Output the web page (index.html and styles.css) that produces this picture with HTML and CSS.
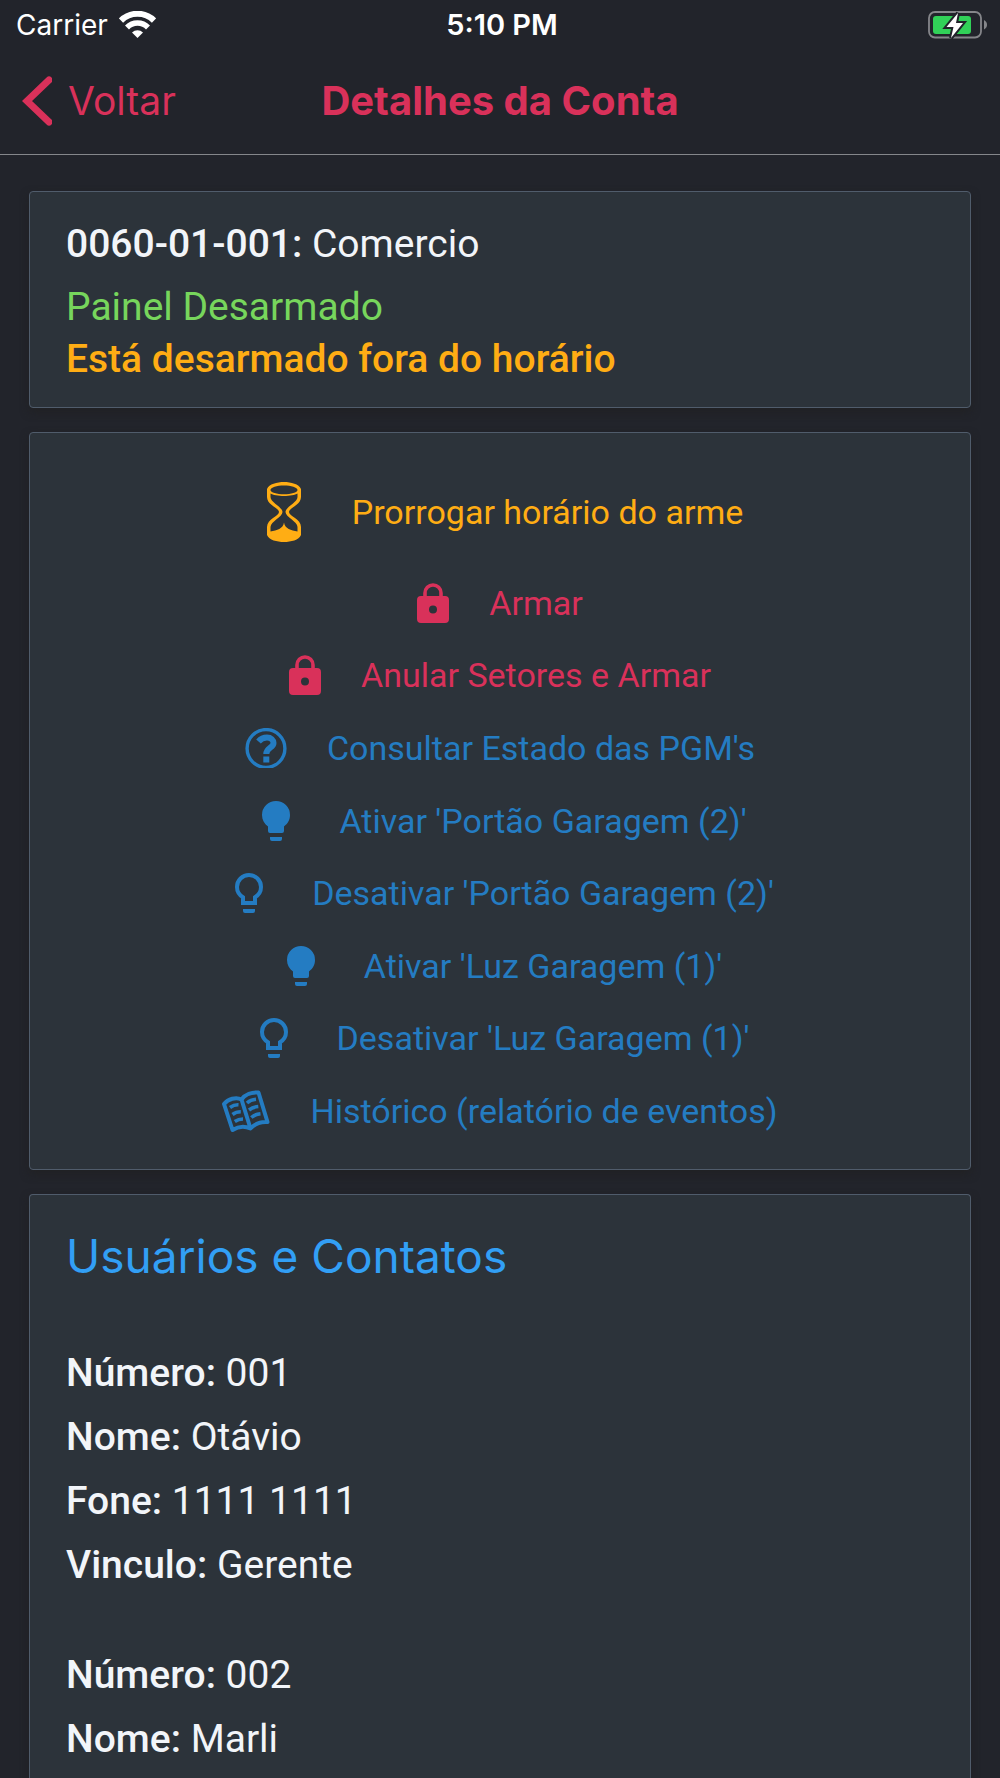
FILE: index.html
```
<!DOCTYPE html>
<html lang="pt-BR">
<head>
<meta charset="UTF-8">
<meta name="viewport" content="width=device-width, initial-scale=1">
<title>Detalhes da Conta</title>
<link rel="stylesheet" href="styles.css">
</head>
<body>
	<!-- icons used more than once -->
	<svg class="sprite" width="0" height="0" aria-hidden="true">
		<symbol id="lock" viewBox="0 0 32 40">
			<path d="M8 15V10a8 8 0 0 1 16 0v5" fill="none" stroke="currentColor" stroke-width="3.6"/>
			<path fill-rule="evenodd" fill="currentColor" d="M4 13H28a4 4 0 0 1 4 4V36a4 4 0 0 1-4 4H4a4 4 0 0 1-4-4V17a4 4 0 0 1 4-4zM16 22.500a4 4 0 1 0 0 8a4 4 0 1 0 0-8z"/>
		</symbol>
		<symbol id="bulb-on" viewBox="0 0 46 40">
			<path fill="currentColor" d="M23 0a14 14 0 0 1 14 14c0 5-2.300 8.800-6 11.400V30a2 2 0 0 1-2 2H17a2 2 0 0 1-2-2V25.400C11.300 22.800 9 19 9 14A14 14 0 0 1 23 0zM17 36H29V38a2 2 0 0 1-2 2H19a2 2 0 0 1-2-2z"/>
		</symbol>
		<symbol id="bulb-off" viewBox="0 0 46 40">
			<path fill="none" stroke="currentColor" stroke-width="4" d="M23 2a12 12 0 0 1 12 12c0 4.600-2.300 8-6 10.300V30H17V24.300C13.300 22 11 18.600 11 14A12 12 0 0 1 23 2z"/>
			<path fill="currentColor" d="M17 36H29V38a2 2 0 0 1-2 2H19a2 2 0 0 1-2-2z"/>
		</symbol>
	</svg>

	<div class="status-bar">
		<div class="carrier">
			<span>Carrier</span>
			<svg width="37" height="28" viewBox="0 0 37 28" aria-hidden="true">
				<path d="M2 9.500a23.500 23.500 0 0 1 33 0" fill="none" stroke="#fff" stroke-width="6"/>
				<path d="M8 16.500a14.500 14.500 0 0 1 21 0" fill="none" stroke="#fff" stroke-width="5.500"/>
				<path d="M18.500 27L13 21.500a8 8 0 0 1 11 0z" fill="#fff"/>
			</svg>
		</div>
		<div class="time">5:10 PM</div>
		<div class="battery">
			<svg width="60" height="30" viewBox="0 0 60 30" aria-hidden="true">
				<rect x="1" y="2" width="52" height="25.500" rx="6" fill="none" stroke="#85868a" stroke-width="1.800"/>
				<path d="M56 10c4 2 4 7.500 0 9.500z" fill="#85868a"/>
				<rect x="5" y="6" width="38" height="18" rx="3" fill="#31d158"/>
				<path d="M30 3L18.500 17h7L23 28 35 13h-7z" fill="#fff" stroke="#22242b" stroke-width="4" paint-order="stroke"/>
			</svg>
		</div>
	</div>

	<header class="nav">
		<a class="back" href="#">
			<svg width="30" height="50" viewBox="0 0 30 50" aria-hidden="true">
				<path d="M27 4L5 25L27 46" fill="none" stroke="currentColor" stroke-width="7" stroke-linecap="round"/>
			</svg>
			<span>Voltar</span>
		</a>
		<h1>Detalhes da Conta</h1>
	</header>

	<main>
		<section class="card account">
			<p><strong>0060-01-001:</strong> Comercio</p>
			<p class="state">Painel Desarmado</p>
			<p class="warning">Está desarmado fora do horário</p>
		</section>

		<section class="card actions">
			<div class="group extend">
				<button class="action" type="button">
					<svg width="55" height="60" viewBox="0 0 55 60" aria-hidden="true">
						<path fill="currentColor" fill-rule="evenodd" d="M10 7C12 2 20 0 27 0S42 2 44 7V15C44 23 32 26 32 30S44 37 44 45V53C42 58 34 60 27 60S12 58 10 53V45C10 37 22 34 22 30S10 23 10 15zM27 3.500C20 3.500 13.500 5.500 13.500 8S20 12.300 27 12.300 40.500 10.500 40.500 8 34 3.500 27 3.500zM13.500 11.500V15C13.500 20.500 25.500 25 25.500 30S13.500 39.500 13.500 45V49.500C20 48 26 47 27 40.500 28 47 34 48 40.500 49.500V45C40.500 39.500 28.500 35 28.500 30S40.500 20.500 40.500 15V11.500C36 14.800 18 14.800 13.500 11.500z"/>
					</svg>
					<span>Prorrogar horário do arme</span>
				</button>
			</div>
			<div class="group arm">
				<button class="action" type="button">
					<svg width="32" height="40" aria-hidden="true"><use href="#lock"/></svg>
					<span>Armar</span>
				</button>
				<button class="action" type="button">
					<svg width="32" height="40" aria-hidden="true"><use href="#lock"/></svg>
					<span>Anular Setores e Armar</span>
				</button>
			</div>
			<div class="group">
				<button class="action" type="button">
					<svg width="42" height="40" viewBox="0 0 42 40" aria-hidden="true">
						<circle cx="21" cy="20.500" r="18.900" fill="none" stroke="currentColor" stroke-width="3.400"/>
						<path d="M13.500 13.500C16 10.500 18.500 9.500 22 9.500C26 9.500 28.500 12 28.500 15C28.500 20 21.300 19.500 21.300 26" fill="none" stroke="currentColor" stroke-width="6"/>
						<path d="M18.300 28.500h6v6h-6z" fill="currentColor"/>
					</svg>
					<span>Consultar Estado das PGM's</span>
				</button>
			</div>
			<div class="group">
				<button class="action" type="button">
					<svg width="46" height="40" aria-hidden="true"><use href="#bulb-on"/></svg>
					<span>Ativar 'Portão Garagem (2)'</span>
				</button>
				<button class="action" type="button">
					<svg width="46" height="40" aria-hidden="true"><use href="#bulb-off"/></svg>
					<span>Desativar 'Portão Garagem (2)'</span>
				</button>
			</div>
			<div class="group">
				<button class="action" type="button">
					<svg width="46" height="40" aria-hidden="true"><use href="#bulb-on"/></svg>
					<span>Ativar 'Luz Garagem (1)'</span>
				</button>
				<button class="action" type="button">
					<svg width="46" height="40" aria-hidden="true"><use href="#bulb-off"/></svg>
					<span>Desativar 'Luz Garagem (1)'</span>
				</button>
			</div>
			<div class="group">
				<button class="action" type="button">
					<svg width="48" height="42" viewBox="0 0 48 42" fill="none" stroke="currentColor" aria-hidden="true">
						<path stroke-width="4" stroke-linejoin="round" d="M2 14C6 9 14 6.500 19.500 9.500C23 4.500 30 2 36.500 2.500L45.500 32C39 31.500 33 33.500 28.500 38.500C23 36 16 36.500 10.500 40zM19.500 9.500L28.500 38.500"/>
						<path stroke-width="3.600" d="M8 17.500Q12 14.500 16.500 14.700M10.500 24.500Q14 21.800 18.800 21.800M12.800 31.500Q16.500 29 21 29M25 13Q28.500 9.800 34 9.300M27 20Q31 17 36.300 16.500M29.300 27.500Q33 24.300 38.500 23.700"/>
					</svg>
					<span>Histórico (relatório de eventos)</span>
				</button>
			</div>
		</section>

		<section class="card contacts">
			<h2>Usuários e Contatos</h2>
			<div class="contact">
				<p><strong>Número:</strong> 001</p>
				<p><strong>Nome:</strong> Otávio</p>
				<p><strong>Fone:</strong> 1111 1111</p>
				<p><strong>Vinculo:</strong> Gerente</p>
			</div>
			<div class="contact">
				<p><strong>Número:</strong> 002</p>
				<p><strong>Nome:</strong> Marli</p>
			</div>
		</section>
	</main>
</body>
</html>
```
FILE: styles.css
```
*{ box-sizing: border-box; }
html, body{ height: 100%; }
body{
	display: flex;
	flex-direction: column;
	margin: 0;
	background: #22242b;
	color: #f2f5f9;
	font: 39px/64px Roboto, sans-serif;
	overflow: hidden;
}
h1, h2, p{ margin: 0; }
strong{ font-weight: 500; }
svg{ flex: none; }
.sprite{ position: absolute; }

.status-bar{
	display: grid;
	grid-template-columns: 1fr auto 1fr;
	align-items: center;
	flex: none;
	height: 50px;
	padding: 0 12px 0 16px;
	color: #fff;
	font: 28px/32px Inter, sans-serif;
}
.carrier{
	display: flex;
	align-items: center;
	gap: 11px;
}
.time{
	font-size: 29px;
	font-weight: 600;
}
.battery{
	display: flex;
	justify-content: flex-end;
}

.nav{
	display: grid;
	grid-template-columns: 1fr auto 1fr;
	align-items: center;
	flex: none;
	height: 105px;
	padding: 0 22px 2px;
	border-bottom: 1px solid #85878b;
	color: #d9315a;
	font: 39px/50px Inter, sans-serif;
}
.back{
	display: flex;
	align-items: center;
	gap: 16px;
	color: inherit;
	text-decoration: none;
}
.nav h1{
	font-size: 40px;
	font-weight: 700;
}

main{
	display: flex;
	flex-direction: column;
	flex: 1 0 auto;
	gap: 24px;
	padding: 36px 29px 0;
}
.card{
	padding: 20px 36px;
	background: #2c333a;
	border: 1px solid #505c6b;
	border-radius: 4px;
	box-shadow: 0 4px 8px rgba(32,33,34,.8);
}

.state{ color: #77d65c; line-height: 62px; }
.warning{
	color: #ffad14;
	font-weight: 500;
	line-height: 42px;
}
.account{ padding-bottom: 27px; }

.actions{ padding: 43px 0 22px; }
.group{ margin-top: 1px; color: #247cc2; }
.group.extend{ margin: 0 0 19px; color: #ffad14; }
.group.arm{ color: #d9315a; }
.action{
	display: flex;
	align-items: center;
	justify-content: center;
	gap: 40px;
	width: 100%;
	height: 72px;
	padding: 0;
	background: none;
	border: 0;
	color: inherit;
	font: 34px/40px Roboto, sans-serif;
	cursor: pointer;
}

.contacts{
	flex: 1 0 auto;
	padding-top: 29px;
	border-bottom: 0;
	border-radius: 4px 4px 0 0;
}
.contacts h2{
	margin-bottom: 53px;
	color: #329ff5;
	font: 400 46px/64px Inter, sans-serif;
}
.contact + .contact{ margin-top: 46px; }
```
